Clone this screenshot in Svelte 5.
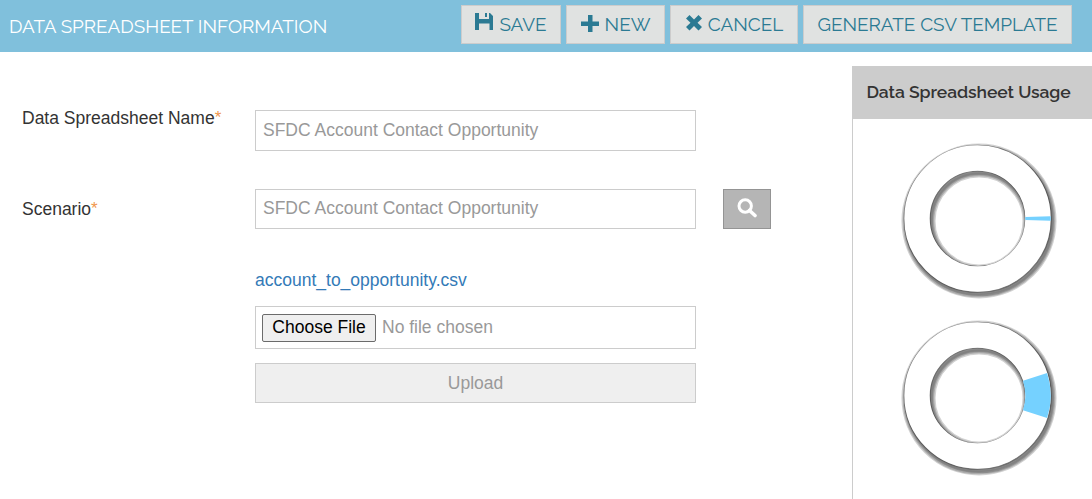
<script>
  const charts = [{ half: 1.75 }, { half: 18 }];
  const point = (r, deg) => {
    const a = (deg * Math.PI) / 180;
    return `${(76.5 + r * Math.cos(a)).toFixed(2)} ${(76.5 + r * Math.sin(a)).toFixed(2)}`;
  };
  const slice = (h) =>
    `M${point(73.2, -h)}A73.2 73.2 0 0 1 ${point(73.2, h)}L${point(47.8, h)}A47.8 47.8 0 0 0 ${point(47.8, -h)}Z`;
  const shadows = [
    { w: 8.5, o: 0.18 },
    { w: 6, o: 0.18 },
    { w: 3.6, o: 0.18 },
    { w: 1.8, o: 0.08 }
  ];
</script>

<header>
  <h1>DATA SPREADSHEET INFORMATION</h1>
  <nav>
    <button class="save">
      <svg width="18" height="18" viewBox="0 0 18 18"><path d="M0 0H4V6H14V0H15L18 3V17H14.500V10.500H4V17H0Z" /><path d="M10 0h2v4h-2z" /></svg>
      <span>SAVE</span>
    </button>
    <button class="new">
      <svg width="18" height="18" viewBox="0 0 18 18"><path d="M7 0h4.500v6.500H18v4.500h-6.500V17H7V11H0V6.500h7Z" /></svg>
      <span>NEW</span>
    </button>
    <button class="cancel">
      <svg width="16" height="16" viewBox="0 0 16 16"><path d="M3.500 0L8 4.500L12.500 0L16 3.500L11.500 7.700L16 12L12.500 15.500L8 11L3.500 15.500L0 12L4.500 7.700L0 3.500Z" /></svg>
      <span>CANCEL</span>
    </button>
    <button class="generate"><span>GENERATE CSV TEMPLATE</span></button>
  </nav>
</header>

<main>
  <form>
    <div class="row name">
      <label for="name">Data Spreadsheet Name<sup>*</sup></label>
      <input id="name" value="SFDC Account Contact Opportunity" />
    </div>
    <div class="row scenario">
      <label for="scenario">Scenario<sup>*</sup></label>
      <input id="scenario" value="SFDC Account Contact Opportunity" />
      <button type="button" class="search" aria-label="Search">
        <svg width="20" height="20" viewBox="0 0 20 20"><circle cx="8.200" cy="8" r="6.200" fill="none" stroke="#fff" stroke-width="3" /><path d="M12.500 12.500L18 17.500" stroke="#fff" stroke-width="3.600" stroke-linecap="round" /></svg>
      </button>
    </div>
    <div class="files">
      <a href="#file">account_to_opportunity.csv</a>
      <div class="picker"><button type="button">Choose File</button><span>No file chosen</span></div>
      <button type="button" class="upload">Upload</button>
    </div>
  </form>

  <aside>
    <h2>Data Spreadsheet Usage</h2>
    <div class="charts">
      {#each charts as chart}
        <svg width="160" height="161" viewBox="0 0 160 161">
          <g fill="none" stroke="#000" transform="translate(1.500 2.500)">
            {#each shadows as s}
              <g stroke-width={s.w} stroke-opacity={s.o}>
                <circle cx="76.500" cy="76.500" r="73.300" />
                <circle cx="76.500" cy="76.500" r="47.700" />
              </g>
            {/each}
          </g>
          <g fill="none" stroke="#000" stroke-opacity="0.300">
            <circle cx="76.800" cy="76.900" r="73.400" stroke-width="1.500" />
            <circle cx="76.800" cy="76.900" r="47.800" stroke-width="1.500" />
          </g>
          <circle cx="76.500" cy="76.500" r="60.500" fill="none" stroke="#fff" stroke-width="25.400" />
          <path d={slice(chart.half)} fill="#75d1ff" />
        </svg>
      {/each}
    </div>
  </aside>
</main>

<style>
  :global(body) { margin: 0; background: #fff; overflow: hidden; }
  * { box-sizing: border-box; }
  button, input { margin: 0; font: inherit; border-radius: 0; }
  header {
    height: 52px; padding: 5px 20px 0 9px; display: flex; justify-content: space-between;
    background: #80c0dc; font-family: Raleway, Lato, sans-serif;
  }
  h1 { margin: 8px 0 0; font-size: 18.850px; line-height: 26px; font-weight: 400; color: #fff; white-space: nowrap; }
  nav { display: flex; gap: 5px; }
  nav button {
    height: 39px; padding: 0; display: flex; justify-content: center; gap: 6px;
    border: 1px solid #ccc; background: #e0e2e1; color: #2b7a93; font-size: 18.900px; line-height: 36px; white-space: nowrap;
  }
  nav svg { fill: #2b7a93; flex: none; }
  .save { width: 100px; } .new { width: 99px; } .cancel { width: 128px; padding-left: 1px; } .generate { width: 269px; }
  .save svg { margin-top: 7px; } .new svg { margin-top: 9px; } .cancel svg { margin-top: 9px; }
  main { display: flex; height: 447px; font-family: "Liberation Sans", Arial, sans-serif; font-size: 17.500px; }
  form { width: 852px; padding: 58px 0 0 22px; }
  .row { display: flex; }
  label { width: 233px; line-height: 20px; color: #333; }
  sup { color: #f0974e; font-size: 17px; line-height: 0; vertical-align: 1px; }
  input { width: 441px; height: 40px; padding: 0 7px 2px; border: 1px solid #ccc; color: #999; background: #fff; outline: 0; }
  .name { height: 79px; } .name input { height: 41px; padding-bottom: 1px; } .name label { margin-top: -2px; }
  .scenario label { margin-top: 10px; }
  .search { width: 48px; height: 40px; margin-left: 27px; padding: 0; border: 1px solid #949494; background: #b5b5b5; display: flex; justify-content: center; }
  .search svg { margin-top: 8px; }
  .files { width: 441px; margin: 41px 0 0 233px; display: flex; flex-direction: column; }
  a { color: #337ab7; text-decoration: none; line-height: 20px; margin-bottom: 16px; }
  .picker { height: 43px; padding: 7px 6px; display: flex; gap: 6px; border: 1px solid #ccc; color: #999; line-height: 26px; }
  .picker button { width: 114px; height: 28px; padding: 0 0 2px; border: 1px solid #6b6b6b; border-radius: 2px; background: #efefef; color: #000; line-height: 24px; }
  .upload { height: 40px; margin-top: 14px; padding: 0; border: 1px solid #ccc; background: #efefef; color: #999; }
  aside { width: 240px; margin-top: 14px; border-left: 1px solid #ccc; }
  h2 { margin: 0; height: 53px; padding-left: 13.500px; background: #ccc; color: #333; font: 600 17.500px/53px Raleway, Lato, sans-serif; letter-spacing: -0.070px; white-space: nowrap; }
  .charts { padding: 23px 0 0 48px; display: flex; flex-direction: column; gap: 16px; }
</style>
